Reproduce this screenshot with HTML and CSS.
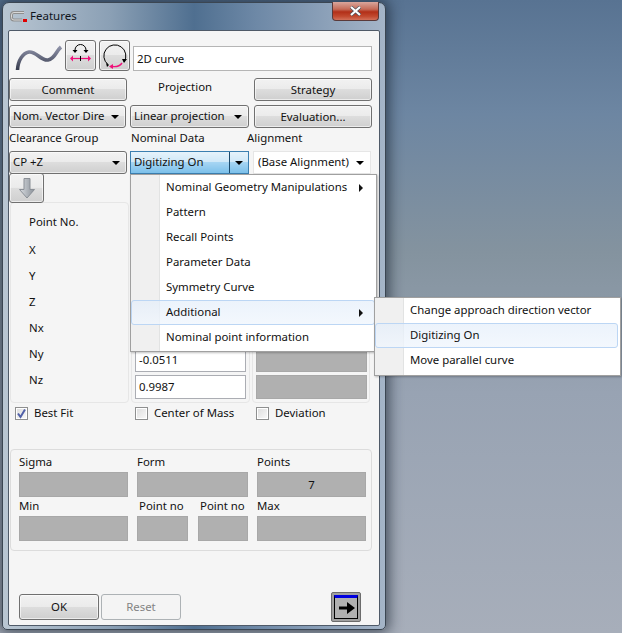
FILE: index.html
```html
<!DOCTYPE html>
<html lang="en">
<head>
<meta charset="utf-8">
<title>Features</title>
<link rel="stylesheet" href="styles.css">
</head>
<body>
<div class="window">
  <div class="titlebar">
    <svg class="title-icon" width="18" height="14" viewBox="0 0 18 14"><path d="M14 2.5H4Q1.5 2.5 1.500 5V7.500Q1.500 10 4 10H12" fill="none" stroke="#8f8f8f" stroke-width="3"/><path d="M14 2.500H4Q1.500 2.500 1.500 5V7.500Q1.500 10 4 10H12" fill="none" stroke="#d8d8d8" stroke-width="1"/><rect x="13" y="9" width="4" height="3" fill="#e00000"/></svg>
    <span class="title-text">Features</span>
    <div class="close"><svg width="13" height="10" viewBox="0 0 13 10"><path d="M2 1l9 8M11 1l-9 8" stroke="#44505c" stroke-width="3.400"/><path d="M2 1l9 8M11 1l-9 8" stroke="#fff" stroke-width="2.200"/></svg></div>
  </div>
  <div class="client">
    <div class="row-top">
      <svg class="curve" width="56" height="32" viewBox="0 0 56 32"><defs><linearGradient id="cg" x1="0" y1="0" x2="0" y2="1"><stop offset="0" stop-color="#8e92a8"/><stop offset="1" stop-color="#353a4c"/></linearGradient></defs><path d="M8.500 30C9 20 14 13 20 12C27 11 32 21 39 20C46 19 47 11 52 7" fill="none" stroke="url(#cg)" stroke-width="3.600"/></svg>
      <button class="btn icon-btn"><svg width="29" height="29" viewBox="0 0 29 29"><path d="M9 11V9a5 5 0 0 1 11 0v2" fill="none" stroke="#000" stroke-width="1"/><path d="M6.500 9h5L9 12zM17.500 9h5L20 12z" fill="#000"/><path d="M5 17.500H24" stroke="#f0107a" stroke-width="1.200"/><path d="M4 17.500l3-3v6zM25 17.500l-3-3v6z" fill="#f0107a"/><path d="M14.500 15v5" stroke="#000"/></svg></button>
      <button class="btn icon-btn"><svg width="29" height="29" viewBox="0 0 29 29"><path d="M8 23.500A11 11 0 1 1 24 21" fill="none" stroke="#000" stroke-width="1"/><path d="M22 18h5l-3 4zM9 24l-3-2 1 4z" fill="#000"/><path d="M12 25.500C16 26 20 25 22 22" fill="none" stroke="#f0107a" stroke-width="1.400"/><path d="M13 23v5l-4-2.500z" fill="#f0107a"/></svg></button>
      <div class="input name-input">2D curve</div>
    </div>
    <div class="row-buttons">
      <button class="btn wide">Comment</button>
      <span class="projection">Projection</span>
      <button class="btn wide">Strategy</button>
    </div>
    <div class="row-combos">
      <div class="btn combo w117"><span class="combo-text">Nom. Vector Dire</span><i class="caret"></i></div>
      <div class="btn combo w119"><span class="combo-text">Linear projection</span><i class="caret"></i></div>
      <button class="btn wide">Evaluation...</button>
    </div>
    <div class="row-labels">
      <span class="lab-a">Clearance Group</span>
      <span class="lab-b">Nominal Data</span>
      <span class="lab-c">Alignment</span>
    </div>
    <div class="row-selects">
      <div class="btn combo w118"><span class="combo-text">CP +Z</span><i class="caret"></i></div>
      <div class="combo focus"><span class="combo-text focus-text">Digitizing On</span><span class="focus-drop"><i class="caret"></i></span></div>
      <div class="combo white"><span class="combo-text">(Base Alignment)</span><i class="caret"></i></div>
    </div>
    <button class="btn arrow-btn"><svg width="18" height="24" viewBox="0 0 18 24"><defs><linearGradient id="ag" x1="0" y1="0" x2="1" y2="0"><stop offset="0" stop-color="#d8dce0"/><stop offset="1" stop-color="#8a9098"/></linearGradient></defs><path d="M6 2.500h6v11h4.500L9 22 1.500 13.500H6z" fill="url(#ag)" stroke="#8a8f96"/></svg></button>
    <div class="panels">
      <div class="panel panel-labels">
        <span class="pt-head">Point No.</span>
        <span>X</span><span>Y</span><span>Z</span><span>Nx</span><span>Ny</span><span>Nz</span>
      </div>
      <div class="panel panel-values">
        <div class="input val">-0.0511</div>
        <div class="input val">0.9987</div>
      </div>
      <div class="panel panel-values panel-right">
        <div class="gray val"></div>
        <div class="gray val"></div>
      </div>
    </div>
    <div class="row-checks">
      <label class="check c1"><span class="box"><svg width="11" height="11" viewBox="0 0 11 11"><path d="M2 5.500l2.500 3.500L9 1.500" fill="none" stroke="#5060a8" stroke-width="2"/></svg></span>Best Fit</label>
      <label class="check c2"><span class="box"></span>Center of Mass</label>
      <label class="check c3"><span class="box"></span>Deviation</label>
    </div>
    <div class="stats">
      <div class="stats-grid">
        <span class="s-lab c-a">Sigma</span><span class="s-lab c-b">Form</span><span class="s-lab c-d">Points</span>
        <div class="gray sf c-a"></div><div class="gray sf c-b"></div><div class="gray sf c-d num">7</div>
        <span class="s-lab c-a">Min</span><span class="s-lab c-b1 ind">Point no</span><span class="s-lab c-b2 ind">Point no</span><span class="s-lab c-d">Max</span>
        <div class="gray sf c-a"></div><div class="gray sf c-b1"></div><div class="gray sf c-b2"></div><div class="gray sf c-d"></div>
      </div>
    </div>
    <div class="footer">
      <button class="btn foot">OK</button>
      <button class="foot disabled">Reset</button>
      <div class="next"><div class="next-in"><svg width="18" height="14" viewBox="0 0 18 14"><path d="M1 5.500h8V1l8 6-8 6V8.500H1z" fill="#000"/></svg></div></div>
    </div>
  </div>
</div>
<div class="menu main-menu">
  <div class="item"><span>Nominal Geometry Manipulations</span><i class="sub"></i></div>
  <div class="item"><span>Pattern</span></div>
  <div class="item"><span>Recall Points</span></div>
  <div class="item"><span>Parameter Data</span></div>
  <div class="item"><span>Symmetry Curve</span></div>
  <div class="item hot"><span>Additional</span><i class="sub"></i></div>
  <div class="item"><span>Nominal point information</span></div>
</div>
<div class="menu sub-menu">
  <div class="item"><span>Change approach direction vector</span></div>
  <div class="item hot"><span>Digitizing On</span></div>
  <div class="item"><span>Move parallel curve</span></div>
</div>
</body>
</html>
```
FILE: styles.css
```css
* { box-sizing: border-box; }
html, body { margin: 0; height: 100%; }
body {
  width: 622px; height: 633px; overflow: hidden; position: relative;
  background: linear-gradient(180deg, #587392 0%, #6d86a2 18%, #84939f 40%, #98a3b3 62%, #a7aeba 100%);
  font: 11.4px/16px "Noto Sans", "Open Sans", sans-serif; color: #111;
}
.window {
  position: absolute; left: 2px; top: 2px; width: 384px; height: 628px;
  border: 1px solid #3b4652; border-radius: 7px 7px 5px 5px;
  background: linear-gradient(90deg, #b9c6d2 0%, #8ba0b5 28%, #4f6f90 50%, #6d88a6 66%, #a5b5c8 100%);
  box-shadow: 0 0 14px 3px rgba(20, 30, 45, .65);
  padding: 0 5px 3px 5px;
  display: flex; flex-direction: column;
}
.titlebar { height: 27px; flex: none; display: flex; align-items: center; position: relative; }
.title-icon { margin: 1px 2px 0 2px; }
.title-text { color: #10151c; margin-top: -1px; font-size: 11.5px; }
.close {
  position: absolute; right: 1px; top: -1px; width: 47px; height: 19px;
  border: 1px solid #5a3a3a; border-top: 0; border-radius: 0 0 4px 4px;
  background: linear-gradient(180deg, #d9a69c 0%, #c56b58 40%, #b22f18 55%, #c24a30 80%, #d2705a 100%);
  display: flex; align-items: center; justify-content: center;
}
.client {
  flex: 1; background: #f5f5f5; border: 1px solid #4f5a68; border-radius: 2px;
  padding-left: 0; display: flex; flex-direction: column; min-height: 0;
}
.btn {
  border: 1px solid #707070; border-radius: 3px;
  background: linear-gradient(180deg, #f2f2f2 0%, #ebebeb 48%, #dddddd 50%, #cfcfcf 100%);
  font: inherit; color: #111; padding: 0; box-shadow: inset 0 0 0 1px rgba(255,255,255,.6);
}
.row-top { display: flex; margin-top: 9px; height: 31px; align-items: flex-start; }
.curve { flex: none; width: 56px; margin-left: 0; }
.icon-btn { width: 31px; height: 31px; margin-right: 3px; display: flex; align-items: center; justify-content: center; }
.input { background: #fff; border: 1px solid #abadb3; padding-left: 3px; display: flex; align-items: center; }
.name-input { width: 239px; height: 25px; margin-top: 6px; border-color: #b5b5b5; }
.row-buttons { display: flex; margin-top: 7px; height: 23px; }
.wide { width: 118px; height: 23px; }
.projection { width: 127px; padding-left: 31px; margin-top: 1px; }
.row-combos { display: flex; margin-top: 4px; height: 23px; }
.combo { height: 23px; display: flex; align-items: center; justify-content: space-between; padding: 0 6px 0 3px; }
.combo-text { white-space: nowrap; overflow: hidden; flex: 1; min-width: 0; padding-bottom: 2px; }
.caret { flex: none; width: 0; height: 0; border: 4px solid transparent; border-top: 4px solid #000; border-bottom: 0; margin-left: 5px; }
.w117 { width: 117px; margin-right: 4px; }
.w119 { width: 119px; margin-right: 5px; }
.w118 { width: 118px; margin-right: 3px; }
.row-labels { display: flex; height: 23px; padding-top: 2px; }
.lab-a { width: 122px; }
.lab-b { width: 116px; }
.row-selects { display: flex; height: 23px; }
.focus {
  width: 119px; margin-right: 4px; padding: 0; border: 1px dotted #123; outline: 1px solid #3b7fb0; outline-offset: -1px;
  background: linear-gradient(180deg, #e6f3fb 0%, #cfe8f8 48%, #a6d5f3 50%, #7cc0ea 100%);
}
.focus-text { padding-left: 3px; }
.focus-drop { width: 19px; height: 100%; border-left: 1px solid #1c4a6c; display: flex; align-items: center; justify-content: center; }
.focus-drop .caret { margin: 0; }
.white { width: 118px; background: #fff; border: 1px solid #e6e6e6; padding-left: 4px; }
.arrow-btn { width: 35px; height: 30px; margin-top: -1px; position: relative; display: flex; align-items: center; justify-content: center; }
.panels { display: flex; gap: 2px; margin-top: -1px; margin-left: 1px; height: 201px; }
.panel { width: 119px; border: 1px solid #e6e6e6; border-radius: 4px; }
.panel:last-child { width: 118px; }
.panel-labels { display: flex; flex-direction: column; padding: 11px 0 0 18px; }
.panel-labels span { height: 26px; }
.pt-head { height: 28px !important; }
.panel-values { display: flex; flex-direction: column; justify-content: flex-end; gap: 3px; padding: 0 3px 3px 3px; }
.panel-right { padding-left: 3px; }
.val { height: 24px; width: 111px; }
.gray { background: #b0b0b0; border: 1px solid #a8a8a8; }
.row-checks { display: flex; height: 46px; padding-top: 2px; }
.check { display: flex; align-items: flex-start; gap: 6px; height: 18px; }
.c1 { margin-left: 6px; width: 120px; }
.c2 { width: 121px; }
.box { width: 13px; height: 13px; border: 1px solid #8e8f8f; background: linear-gradient(135deg, #dcdcdc, #fafafa); box-shadow: inset 0 0 0 1px #fff; margin-top: 2px; display: flex; align-items: center; justify-content: center; }
.box svg { flex: none; margin-top: -1px; }
.stats { margin-left: 1px; width: 362px; height: 102px; border: 1px solid #dcdcdc; border-radius: 4px; padding: 2px 0 0 8px; }
.stats-grid {
  display: grid; grid-template-columns: 109px 9px 51px 10px 50px 9px 109px;
  grid-template-rows: 20px 25px 19px 25px;
}
.c-a { grid-column: 1; }
.c-b { grid-column: 3 / 6; }
.c-b1 { grid-column: 3; }
.c-b2 { grid-column: 5; }
.c-d { grid-column: 7; }
.s-lab { align-self: end; line-height: 18px; white-space: nowrap; padding-bottom: 1px; }
.ind { padding-left: 2px; }
.num { display: flex; align-items: center; justify-content: center; }
.footer { display: flex; align-items: flex-end; height: 69px; padding-left: 10px; gap: 2px; margin-bottom: 0; }
.foot { width: 80px; height: 26px; font: inherit; }
.disabled { background: #f4f4f4; border: 1px solid #adb2b5; border-radius: 3px; color: #838383; padding: 0; }
.next { margin-left: 148px; width: 30px; height: 30px; margin-bottom: -2px; background: #a0a0a0; border: 1px solid #6c6c6c; border-radius: 2px; padding: 2px; }
.next-in { height: 100%; background: #b0b0b0; border: 1px solid #000; border-top: 3px solid #0000e0; display: flex; align-items: center; justify-content: flex-end; padding-right: 1px; }
.menu {
  position: absolute; width: 247px; background: #fff; border: 1px solid #a0a0a0; padding: 0;
  background-image: linear-gradient(90deg, #f0f0f0 28px, #e2e3e3 28px, #e2e3e3 29px, #fff 29px);
  box-shadow: 1px 1px 2px rgba(0,0,0,.25);
}
.main-menu { left: 130px; top: 174px; height: 178px; z-index: 2; }
.sub-menu { left: 374px; top: 297px; height: 79px; z-index: 3; }
.item { height: 25px; display: flex; align-items: center; justify-content: space-between; padding: 0 11px 0 34px; margin: 0 1px 0 0; white-space: nowrap; border: 1px solid transparent; border-radius: 3px; }
.item span { padding-bottom: 2px; }
.sub-menu .item { margin: 0 2px 0 0; }
.hot { border-color: #bcd6f4; background: linear-gradient(180deg, rgba(228,238,250,.7), rgba(240,246,253,.8)); }
.sub { width: 0; height: 0; border: 4px solid transparent; border-left: 4px solid #111; border-right: 0; }
```
